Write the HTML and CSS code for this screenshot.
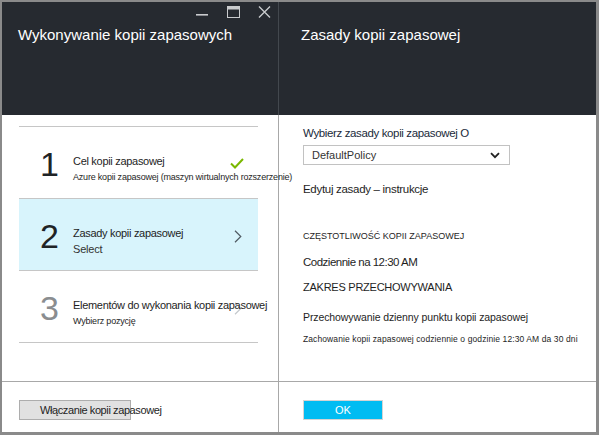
FILE: index.html
```html
<!DOCTYPE html>
<html lang="pl">
<head>
<meta charset="utf-8">
<title>Wykonywanie kopii zapasowych</title>
<link rel="stylesheet" href="styles.css">
</head>
<body>
<div class="window">
  <section class="panel panel-left">
    <header class="head head-left">
      <div class="controls">
        <svg class="ctl" width="13" height="12" viewBox="0 0 13 12"><rect x="0" y="8" width="12" height="1.6" fill="#c9cbcd"/></svg>
        <svg class="ctl" width="13" height="12" viewBox="0 0 13 12"><rect x="0.5" y="0.5" width="12" height="11" fill="none" stroke="#c9cbcd" stroke-width="1"/><rect x="0.5" y="0.5" width="12" height="3" fill="#c9cbcd"/></svg>
        <svg class="ctl" width="13" height="12" viewBox="0 0 13 12"><path d="M1 0.5 L12 11.5 M12 0.5 L1 11.5" stroke="#c9cbcd" stroke-width="1.4" fill="none"/></svg>
      </div>
      <h1 class="title">Wykonywanie kopii zapasowych</h1>
    </header>
    <div class="body body-left">
      <div class="steps">
        <div class="step">
          <div class="num">1</div>
          <div class="step-text">
            <div class="step-title">Cel kopii zapasowej</div>
            <div class="step-sub">Azure kopii zapasowej (maszyn wirtualnych rozszerzenie)</div>
          </div>
          <div class="step-icon">
            <svg width="14" height="11" viewBox="0 0 14 11"><path d="M1 5.5 L5 9.5 L13 1" stroke="#7ab800" stroke-width="2" fill="none"/></svg>
          </div>
        </div>
        <div class="step step-active">
          <div class="num">2</div>
          <div class="step-text">
            <div class="step-title">Zasady kopii zapasowej</div>
            <div class="step-sub">Select</div>
          </div>
          <div class="step-icon chev">
            <svg width="8" height="13" viewBox="0 0 8 13"><path d="M1 0.8 L6.8 6.5 L1 12.2" stroke="#505a63" stroke-width="1.2" fill="none"/></svg>
          </div>
        </div>
        <div class="step">
          <div class="num num-dim">3</div>
          <div class="step-text">
            <div class="step-title">Elementów do wykonania kopii zapasowej</div>
            <div class="step-sub">Wybierz pozycję</div>
          </div>
          <div class="step-icon chev chev-dim">
            <svg width="8" height="13" viewBox="0 0 8 13"><path d="M1 0.8 L6.8 6.5 L1 12.2" stroke="#c4c8cc" stroke-width="1.2" fill="none"/></svg>
          </div>
        </div>
      </div>
    </div>
    <footer class="foot foot-left">
      <button class="btn btn-gray" type="button"><span>Włączanie kopii zapasowej</span></button>
    </footer>
  </section>
  <section class="panel panel-right">
    <header class="head head-right">
      <h1 class="title">Zasady kopii zapasowej</h1>
    </header>
    <div class="body body-right">
      <div class="label">Wybierz zasady kopii zapasowej O</div>
      <div class="select">
        <span>DefaultPolicy</span>
        <svg width="10" height="7" viewBox="0 0 10 7"><path d="M1 1.2 L5 5.2 L9 1.2" stroke="#222" stroke-width="1.8" fill="none"/></svg>
      </div>
      <div class="link">Edytuj zasady – instrukcje</div>
      <div class="caps">CZĘSTOTLIWOŚĆ KOPII ZAPASOWEJ</div>
      <div class="value">Codziennie na 12:30 AM</div>
      <div class="caps2">ZAKRES PRZECHOWYWANIA</div>
      <div class="ret">Przechowywanie dzienny punktu kopii zapasowej</div>
      <div class="small">Zachowanie kopii zapasowej codziennie o godzinie 12:30 AM da 30 dni</div>
    </div>
    <footer class="foot foot-right">
      <button class="btn btn-ok" type="button">OK</button>
    </footer>
  </section>
</div>
</body>
</html>
```

FILE: styles.css
```css
* { box-sizing: border-box; }
html, body { margin: 0; padding: 0; }
body {
  width: 599px;
  height: 435px;
  overflow: hidden;
  background: #ffffff;
  font-family: "Liberation Sans", Arial, sans-serif;
  color: #1e1e1e;
}
.window {
  width: 599px;
  height: 435px;
  border-style: solid;
  border-color: #8a8a8a;
  border-width: 2px 3px 3px 2px;
  display: flex;
  background: #fff;
}
.panel {
  display: flex;
  flex-direction: column;
  height: 100%;
}
.panel-left {
  width: 277px;
  flex: none;
  position: relative;
  z-index: 1;
}
.panel-right {
  flex: 1;
  min-width: 0;
}
.head {
  height: 113px;
  background: #262a30;
  flex: none;
}
.head-left {
  padding: 4px 7px 0 16px;
  border-right: 1px solid #43484e;
}
.head-right {
  padding: 23px 16px 0 22px;
}
.controls {
  display: flex;
  justify-content: flex-end;
  gap: 18px;
  height: 12px;
}
.ctl { display: block; }
.title {
  margin: 0;
  font-weight: 400;
  font-size: 15px;
  line-height: 20px;
  color: #ffffff;
  white-space: nowrap;
}
.head-left .title { margin-top: 7px; }

.body {
  flex: 1;
}
.body-left {
  padding-top: 11px;
  border-right: 1px solid #a8a8a8;
}
.steps {
  margin-left: 17px;
  width: 239px;
}
.step {
  height: 72px;
  border-top: 1px solid #c6c6c6;
  display: flex;
  align-items: flex-start;
  padding-left: 21px;
}
.step:last-child { border-bottom: 1px solid #c6c6c6; height: 73px; }
.step-active { background: #d8f4fc; }
.num {
  width: 33px;
  flex: none;
  align-self: center;
  font-size: 34px;
  line-height: 40px;
  color: #1f2326;
  margin-top: 2px;
}
.num-dim { color: #8a8d90; }
.step-text {
  flex: 1;
  min-width: 0;
  padding-top: 26px;
  white-space: nowrap;
}
.step-title {
  font-size: 11px;
  line-height: 16px;
  letter-spacing: -0.3px;
  color: #1e1e1e;
}
.step-sub {
  font-size: 9px;
  line-height: 16px;
  letter-spacing: -0.2px;
  color: #1e1e1e;
}
.step-active .step-sub { font-size: 11px; letter-spacing: -0.2px; color: #333; }
.step-icon {
  width: 28px;
  flex: none;
  padding-top: 31px;
}
.step-icon svg { display: block; }
.chev { padding-left: 4px; padding-top: 31px; }
.chev-dim { position: relative; z-index: -1; }

.body-right {
  padding: 10px 0 0 24px;
  font-size: 11px;
  line-height: 16px;
  white-space: nowrap;
}
.label { color: #1a2a3a; font-size: 11.5px; letter-spacing: -0.37px; }
.select {
  margin-top: 4px;
  width: 207px;
  height: 20px;
  border: 1px solid #c2c2c2;
  display: flex;
  align-items: center;
  justify-content: space-between;
  padding: 0 9px 0 8px;
  font-size: 11px;
  color: #333;
}
.select svg { display: block; }
.link { margin-top: 16px; font-size: 11.5px; letter-spacing: -0.3px; color: #1e1e1e; }
.caps { margin-top: 31px; font-size: 9px; }
.value { margin-top: 10px; font-size: 11.5px; letter-spacing: -0.5px; }
.caps2 { margin-top: 9px; font-size: 11px; letter-spacing: -0.25px; }
.ret { margin-top: 14px; font-size: 10.5px; letter-spacing: -0.1px; }
.small { margin-top: 6px; font-size: 8.5px; letter-spacing: 0.1px; }

.foot {
  height: 51px;
  flex: none;
  border-top: 1px solid #a8a8a8;
  padding-top: 18px;
}
.foot-left {
  padding-left: 17px;
  border-right: 1px solid #a8a8a8;
}
.foot-right {
  padding-left: 24px;
}
.btn {
  display: block;
  height: 20px;
  margin: 0;
  font-family: "Liberation Sans", Arial, sans-serif;
  font-size: 11px;
  line-height: 18px;
  white-space: nowrap;
  cursor: pointer;
}
.btn-gray {
  width: 112px;
  background: #e1e1e1;
  border: 1px solid #adadad;
  color: #1e1e1e;
  padding: 0 0 0 20px;
  text-align: left;
  letter-spacing: -0.4px;
  overflow: visible;
}
.btn-ok {
  width: 80px;
  background: #00bcf2;
  border: 1px solid #d4d4d4;
  color: #ffffff;
  padding: 0;
  text-align: center;
}
```
